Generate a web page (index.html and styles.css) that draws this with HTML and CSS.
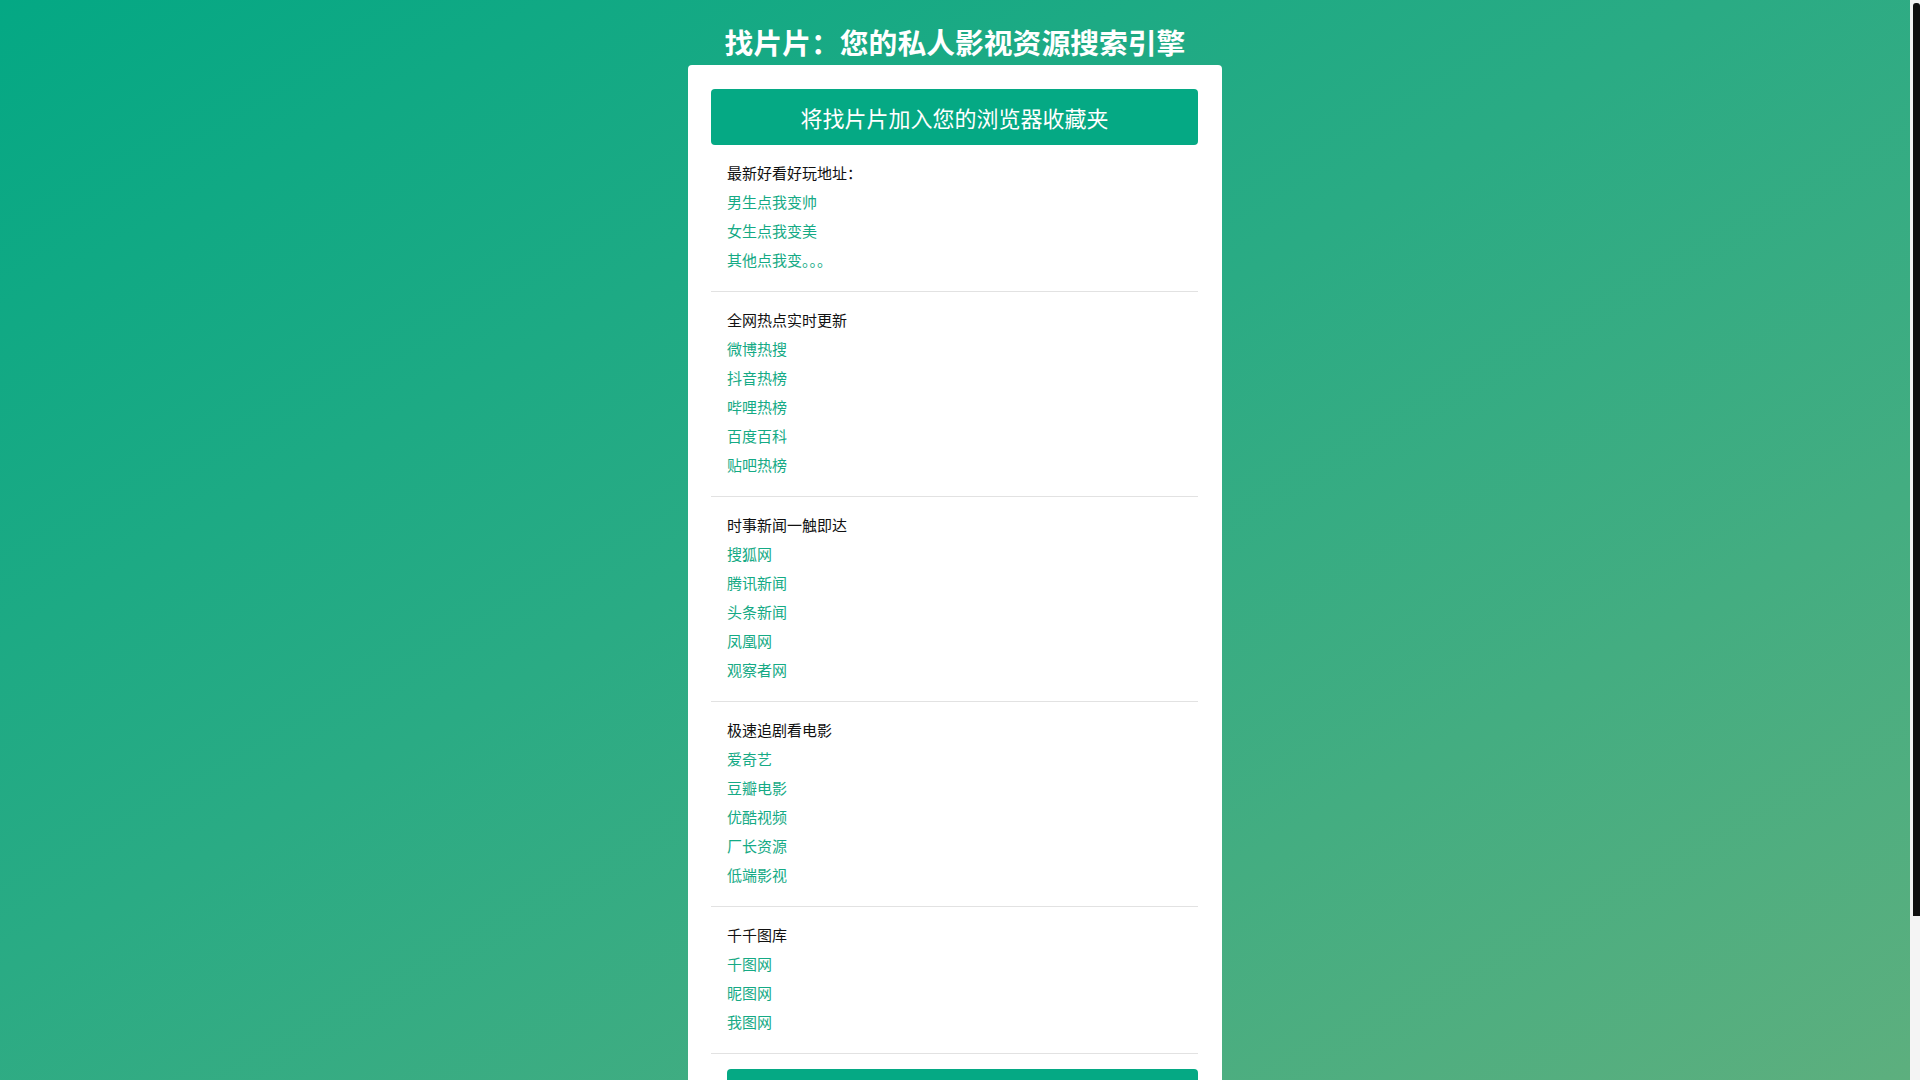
FILE: index.html
```html
<!DOCTYPE html>
<html lang="zh-CN">
<head>
<meta charset="utf-8">
<title>找片片：您的私人影视资源搜索引擎</title>
<link rel="stylesheet" href="styles.css">
</head>
<body>
<h1 class="title">找片片：您的私人影视资源搜索引擎</h1>
<div class="card">
  <a class="btn" href="#">将找片片加入您的浏览器收藏夹</a>

  <div class="section">
    <div class="head">最新好看好玩地址：</div>
    <a class="link" href="#">男生点我变帅</a>
    <a class="link" href="#">女生点我变美</a>
    <a class="link" href="#">其他点我变。。。</a>
  </div>

  <div class="section">
    <div class="head">全网热点实时更新</div>
    <a class="link" href="#">微博热搜</a>
    <a class="link" href="#">抖音热榜</a>
    <a class="link" href="#">哔哩热榜</a>
    <a class="link" href="#">百度百科</a>
    <a class="link" href="#">贴吧热榜</a>
  </div>

  <div class="section">
    <div class="head">时事新闻一触即达</div>
    <a class="link" href="#">搜狐网</a>
    <a class="link" href="#">腾讯新闻</a>
    <a class="link" href="#">头条新闻</a>
    <a class="link" href="#">凤凰网</a>
    <a class="link" href="#">观察者网</a>
  </div>

  <div class="section">
    <div class="head">极速追剧看电影</div>
    <a class="link" href="#">爱奇艺</a>
    <a class="link" href="#">豆瓣电影</a>
    <a class="link" href="#">优酷视频</a>
    <a class="link" href="#">厂长资源</a>
    <a class="link" href="#">低端影视</a>
  </div>

  <div class="section">
    <div class="head">千千图库</div>
    <a class="link" href="#">千图网</a>
    <a class="link" href="#">昵图网</a>
    <a class="link" href="#">我图网</a>
  </div>

  <div class="bottom">
    <a class="btn" href="#">返回顶部</a>
  </div>
</div>
<div class="scrollbar"><div class="thumb"></div></div>
</body>
</html>
```

FILE: styles.css
```css
html {
  min-height: 100%;
  background: linear-gradient(to bottom right, #04a884 0%, #2aab84 45%, #5daf7e 100%) fixed;
}
body {
  margin: 0 10px 0 0;
  padding: 24px 0 130px;
  font-family: "Noto Sans CJK SC", "Noto Sans", sans-serif;
  font-size: 15px;
  color: #111;
}
.title {
  margin: 0 0 5px;
  font-size: 28.8px;
  line-height: 36px;
  font-weight: 700;
  color: #ffffff;
  text-align: center;
}
.card {
  width: 534px;
  box-sizing: border-box;
  margin: 0 auto;
  padding: 24px 24px 24px 23px;
  background: #ffffff;
  border-radius: 4px;
}
.btn {
  display: flex;
  align-items: center;
  justify-content: center;
  height: 56px;
  background: #05a984;
  color: #ffffff;
  font-size: 22px;
  text-decoration: none;
  border-radius: 4px;
}
.section {
  display: flex;
  flex-direction: column;
  padding: 13px 16px 17px;
  border-bottom: 1px solid #e2e2e2;
}
.head, .link {
  line-height: 29px;
}
.head {
  color: #111;
}
.link {
  color: #15aa85;
  text-decoration: none;
  align-self: flex-start;
}
.bottom {
  padding: 15px 0 0 16px;
}
.scrollbar {
  position: fixed;
  top: 0;
  right: 0;
  width: 10px;
  height: 100%;
  background: #f4f4f4;
}
.thumb {
  position: absolute;
  top: 3px;
  left: 3px;
  right: 0;
  height: 913px;
  background: #111111;
  border-radius: 3px 3px 0 0;
}
```
